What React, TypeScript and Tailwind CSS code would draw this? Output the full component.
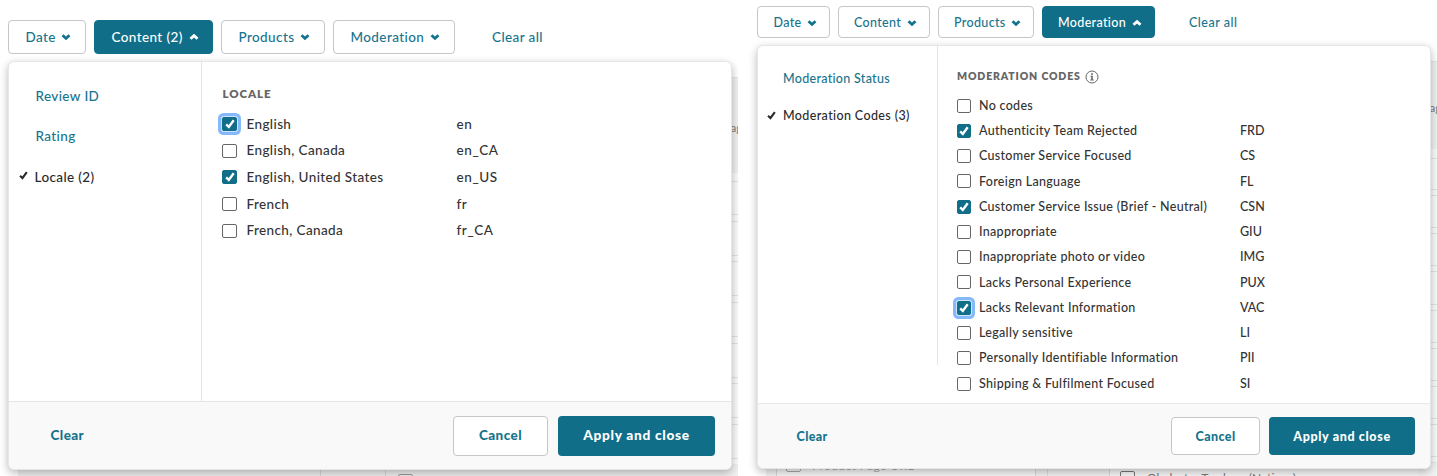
import React from 'react';
import clsx from 'clsx';

type Option = { label: string; code?: string; checked?: boolean; focused?: boolean };

const LOCALES: Option[] = [
  { label: 'English', code: 'en', checked: true, focused: true },
  { label: 'English, Canada', code: 'en_CA' },
  { label: 'English, United States', code: 'en_US', checked: true },
  { label: 'French', code: 'fr' },
  { label: 'French, Canada', code: 'fr_CA' },
];

const CODES: Option[] = [
  { label: 'No codes' },
  { label: 'Authenticity Team Rejected', code: 'FRD', checked: true },
  { label: 'Customer Service Focused', code: 'CS' },
  { label: 'Foreign Language', code: 'FL' },
  { label: 'Customer Service Issue (Brief - Neutral)', code: 'CSN', checked: true },
  { label: 'Inappropriate', code: 'GIU' },
  { label: 'Inappropriate photo or video', code: 'IMG' },
  { label: 'Lacks Personal Experience', code: 'PUX' },
  { label: 'Lacks Relevant Information', code: 'VAC', checked: true, focused: true },
  { label: 'Legally sensitive', code: 'LI' },
  { label: 'Personally Identifiable Information', code: 'PII' },
  { label: 'Shipping & Fulfilment Focused', code: 'SI' },
];

const Chevron = ({ up = false }: { up?: boolean }) => (
  <svg viewBox="0 0 10 8" className={clsx('h-2 w-2.5 shrink-0', up && 'rotate-180')}>
    <path d="M1.5 2.2 5 5.3 8.5 2.2" fill="none" stroke="currentColor" strokeWidth="2.8" />
  </svg>
);

const Tick = ({ className }: { className: string }) => (
  <svg viewBox="0 0 10 10" className={className}>
    <path d="M1.2 5.4 3.8 8 8.7 1.3" fill="none" stroke="currentColor" strokeWidth="2.4" />
  </svg>
);

const InfoIcon = () => (
  <svg viewBox="0 0 14 14" className="ml-1 size-[14px] text-[#666]">
    <circle cx="7" cy="7" r="6" fill="none" stroke="currentColor" strokeWidth="1" />
    <path d="M6.1 3.2h1.8v1.6H6.1zM5.4 5.7h2.4v3.7h.9v1H5.3v-1h.9V6.7h-.8z" fill="currentColor" />
  </svg>
);

const FilterButton = ({ label, className, open = false }: { label: string; className: string; open?: boolean }) => (
  <button
    className={clsx(
      'flex items-center justify-between rounded-[4px] border font-medium whitespace-nowrap',
      open ? 'border-[#116e88] bg-[#116e88] text-white' : 'border-[#c6c6c6] bg-white text-[#17748d]',
      className
    )}
  >
    {label}
    <Chevron up={open} />
  </button>
);

const Checkbox = ({ option, className }: { option: Option; className: string }) => (
  <span
    className={clsx(
      'flex shrink-0 items-center justify-center rounded-[2px] border',
      option.checked ? 'border-[#116e88] bg-[#116e88] text-white' : 'border-[#666] bg-white',
      option.focused && 'shadow-[0_0_0_1px_#cfe3fd,0_0_0_4px_#85b9fb]',
      className
    )}
  >
    {option.checked && <Tick className="size-[10px]" />}
  </span>
);

const SectionTitle = ({ className, children }: { className: string; children: React.ReactNode }) => (
  <h3 className={clsx('flex items-center font-extrabold text-[#666]', className)}>{children}</h3>
);

const ContentFilter = () => (
  <div className="relative h-[476px] w-[738px] overflow-hidden pt-5 pl-2">
    {/* Results table behind the panel */}
    <div className="absolute right-0 bottom-0 left-[18px] top-[77px] border-t border-[#e4e4e4] bg-[#fafafa]">
      <div className="h-[95px] bg-[#f0f0f0] pt-[42px] text-right text-[11px] leading-4 text-[#777]">
        <span className="-mr-1">ag</span>
      </div>
      <div className="mt-2 h-[34px] border-y border-[#e2e2e2]" />
      {[0, 1, 2, 3, 4, 5].map((row) => (
        <div key={row} className="mt-[5.5px] h-[35.2px] border-y border-[#e2e2e2]" />
      ))}
      <div className="mt-[5px] flex h-5 bg-[#f0f0f0]">
        <div className="w-[303px] border-r border-[#d9d9d9]" />
        <div className="ml-[57px] w-2 border-r border-[#d9d9d9]" />
        <div className="mt-[10px] ml-3 h-4 w-[15px] rounded-[2px] border border-[#999]" />
      </div>
    </div>

    <div className="relative flex h-[34px] gap-2 text-[13.5px] tracking-[0.4px]">
      <FilterButton label="Date" className="w-[78px] pr-3.5 pl-[16.5px]" />
      <FilterButton label="Content (2)" className="w-[119px] pr-[13px] pl-[16.5px]" open />
      <FilterButton label="Products" className="w-[104px] pr-3.5 pl-[16.5px]" />
      <FilterButton label="Moderation" className="w-[122px] pr-3.5 pl-[16.5px]" />
      <button className="ml-[29px] font-medium text-[#17748d]">Clear all</button>
    </div>

    <div className="relative mt-[7px] flex h-[409px] w-[724px] flex-col overflow-hidden rounded-[6px] border border-[#e6e6e6] bg-white shadow-[0_3px_8px_rgba(0,0,0,0.28)]">
      <div className="flex flex-1 text-[13.5px] font-medium tracking-[0.38px]">
        <nav className="flex w-[193px] flex-col gap-5 border-r border-[#e5e5e5] pt-6 pl-[26.5px] leading-5 text-[#17748d]">
          <span>Review ID</span>
          <span>Rating</span>
          <span className="-ml-[17px] flex items-center pt-px text-[#2a2a2a]">
            <Tick className="mr-[7px] mb-1 size-[9px]" />
            Locale (2)
          </span>
        </nav>
        <div className="flex-1 pt-6 pl-5">
          <SectionTitle className="h-4 pl-[0.5px] text-[11.5px] tracking-[0.9px]">LOCALE</SectionTitle>
          <ul className="mt-[8.5px]">
            {LOCALES.map((option) => (
              <li key={option.label} className="flex h-[26.7px] items-center text-[#333]">
                <Checkbox option={option} className="mr-[9.5px] h-[14px] w-[15px]" />
                <span className="w-[210px]">{option.label}</span>
                <span className="tracking-[0.6px]">{option.code}</span>
              </li>
            ))}
          </ul>
        </div>
      </div>
      <div className="flex h-[68px] items-center border-t border-[#e5e5e5] bg-[#f9f9f9] pr-4 pl-[41.5px] text-[13.5px] font-black tracking-[0.4px]">
        <button className="text-[#17748d]">Clear</button>
        <button className="ml-auto h-10 w-[95px] rounded-[4px] border border-[#c6c6c6] bg-white text-[#17748d]">Cancel</button>
        <button className="ml-2.5 h-10 w-[157px] rounded-[4px] bg-[#116e88] text-[13.7px] tracking-[0.7px] text-white">Apply and close</button>
      </div>
    </div>
  </div>
);

const ModerationFilter = () => (
  <div className="relative h-[476px] flex-1 overflow-hidden pt-1.5 pl-[19px]">
    {/* Results table behind the panel */}
    <div className="absolute right-0 bottom-0 left-[28px] top-[61px] border-t border-[#e4e4e4] bg-[#fafafa]">
      <div className="h-[87px] bg-[#f0f0f0] pt-[38px] text-right text-[11px] leading-4 text-[#777]">
        <span className="-mr-1">ag</span>
      </div>
      <div className="mt-[9px] h-[32px] border-y border-[#e2e2e2]" />
      {[0, 1, 2, 3, 4, 5, 6].map((row) => (
        <div key={row} className="mt-[5px] h-[33.2px] border-y border-[#e2e2e2]" />
      ))}
      <div className="mt-[5px] flex h-4 border-t border-[#e2e2e2] bg-[#f2f2f2] text-[12px] leading-4 whitespace-nowrap">
        <div className="ml-[10px] flex w-[260px] border-x border-[#d9d9d9] bg-[#f7f7f7] pl-[9px] text-[#aaa]">
          <span className="-mt-[5px] mr-[11px] h-[14px] w-[15px] rounded-[2px] border border-[#aaa]" />
          <span className="-mt-[5px] tracking-[0.4px]">Product Page URL</span>
        </div>
        <div className="w-[12px] border-r border-[#ddd]" />
        <div className="ml-[61px] flex w-[310px] border-l border-[#d9d9d9] bg-[#f7f7f7] pl-[10px] text-[#777]">
          <span className="mt-[8px] mr-[12px] h-[14px] w-[15px] rounded-[2px] border border-[#777]" />
          <span className="mt-[7px]">Obelester Tracleon (Nations)</span>
        </div>
      </div>
    </div>

    <div className="relative flex h-8 gap-2 text-[12.5px] tracking-[0.35px]">
      <FilterButton label="Date" className="w-[73px] pt-0.5 pr-3 pl-[15.5px]" />
      <FilterButton label="Content" className="w-[92px] pt-0.5 pr-3 pl-[15px]" />
      <FilterButton label="Products" className="w-[96px] pt-0.5 pr-3 pl-[15px]" />
      <FilterButton label="Moderation" className="w-[113px] pt-0.5 pr-3 pl-[15px]" open />
      <button className="ml-[26px] pt-0.5 font-medium tracking-[0.5px] text-[#17748d]">Clear all</button>
    </div>

    <div className="relative mt-[7px] flex h-[424px] w-[674px] flex-col overflow-hidden rounded-[6px] border border-[#e6e6e6] bg-white shadow-[0_3px_8px_rgba(0,0,0,0.28)]">
      <div className="flex flex-1 text-[12.5px] font-medium tracking-[0.3px]">
        <nav className="flex h-[319px] w-[180px] flex-col gap-[17px] border-r border-[#e5e5e5] pt-[23px] pl-[25px] leading-5 text-[#17748d]">
          <span>Moderation Status</span>
          <span className="-ml-4 flex items-center whitespace-nowrap text-[#2a2a2a]">
            <Tick className="mr-[7px] mb-0.5 size-[9px]" />
            <span className="tracking-[0.38px]">Moderation Codes (3)</span>
          </span>
        </nav>
        <div className="flex-1 pt-[23px] pl-[19px]">
          <SectionTitle className="h-4 text-[10.5px] tracking-[0.85px]">
            MODERATION CODES
            <InfoIcon />
          </SectionTitle>
          <ul className="mt-2">
            {CODES.map((option) => (
              <li key={option.label} className="flex h-[25.27px] items-center text-[#333]">
                <Checkbox option={option} className="mr-2 size-[14px]" />
                <span className="w-[261px] pt-px">{option.label}</span>
                <span className="pt-px tracking-normal">{option.code}</span>
              </li>
            ))}
          </ul>
        </div>
      </div>
      <div className="flex h-[65px] items-center border-t border-[#e9e9e9] bg-[#f9f9f9] pr-[15px] pl-[38.5px] text-[12.5px] font-black tracking-[0.4px]">
        <button className="pt-[3px] text-[#17748d]">Clear</button>
        <button className="ml-auto h-[38px] w-[89px] rounded-[4px] border border-[#c6c6c6] bg-white pt-[3px] text-[#17748d]">Cancel</button>
        <button className="ml-[9px] h-[38px] w-[146px] rounded-[4px] bg-[#116e88] pt-[3px] tracking-[0.65px] text-white">Apply and close</button>
      </div>
    </div>
  </div>
);

export default function App() {
  return (
    <main className="flex h-[476px] w-[1437px] overflow-hidden bg-white font-['Lato','Open_Sans',sans-serif]">
      <ContentFilter />
      <ModerationFilter />
    </main>
  );
}
